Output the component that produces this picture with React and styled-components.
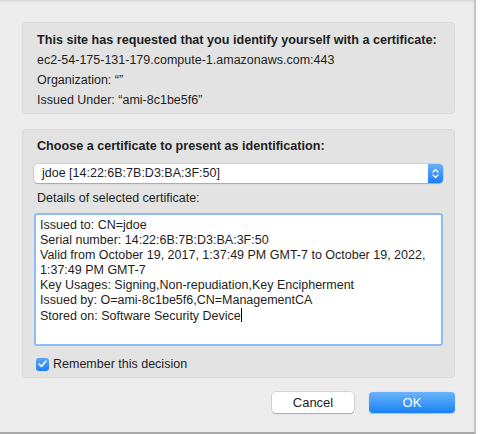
import React from "react";
import styled, { createGlobalStyle } from "styled-components";

const Global = createGlobalStyle`
  html, body { margin: 0; padding: 0; background: #ffffff; }
  body { font-family: "Liberation Sans", Arial, sans-serif; }
  * { box-sizing: border-box; }
`;

const Window = styled.div`
  width: 476px;
  height: 434px;
  background: #ececec;
  border-right: 2px solid #c4c4c4;
  border-bottom: 2px solid #a9a9a9;
  box-shadow: inset 0 3px 3px -2px rgba(0, 0, 0, 0.12);
  padding: 22px 19px 0 22px;
  display: flex;
  flex-direction: column;
  color: #1e1e1e;
  font-size: 12.5px;
`;

const Group = styled.div`
  width: 433px;
  height: ${(p) => p.$h}px;
  background: #e3e3e3;
  border: 1px solid #dadada;
  border-radius: 4px;
  padding: ${(p) => p.$pad};
  margin-bottom: ${(p) => p.$mb || 0}px;
  display: flex;
  flex-direction: column;
`;

const Title = styled.div`
  font-weight: bold;
  font-size: 12.6px;
  line-height: 20px;
  white-space: nowrap;
  padding-left: ${(p) => p.$indent || 0}px;
`;

const Line = styled.div`
  line-height: 20px;
  padding-left: ${(p) => p.$indent || 0}px;
`;

const Select = styled.div`
  margin-top: 8px;
  height: 19px;
  width: 409px;
  display: flex;
  background: #fff;
  border-radius: 4px;
  box-shadow: 0 0 0 0.5px rgba(0,0,0,0.18), 0 1px 1px rgba(0,0,0,0.18);
  overflow: hidden;
`;

const SelectText = styled.div`
  flex: 1;
  padding-left: 8px;
  line-height: 19px;
  font-size: 12.5px;
`;

const Stepper = styled.div`
  width: 15px;
  background: linear-gradient(#68b0f8, #1b80f3);
  display: flex;
  align-items: center;
  justify-content: center;
`;

const Label = styled.div`
  line-height: 20px;
  margin-top: 5px;
  padding-left: 3px;
`;

const TextArea = styled.div`
  margin-top: 5px;
  width: 409px;
  height: 133px;
  background: #fff;
  border: 2px solid #8fbdf2;
  border-radius: 3px;
  padding: 3px 4px;
  font-size: 12.5px;
  line-height: 15px;
`;

const Caret = styled.span`
  display: inline-block;
  width: 1px;
  height: 14px;
  background: #000;
  vertical-align: -2px;
`;

const CheckRow = styled.label`
  display: flex;
  align-items: center;
  gap: 4px;
  margin-top: 10px;
  padding-left: 2px;
  line-height: 16px;
  font-size: 12.5px;
`;

const Check = styled.span`
  width: 13px;
  height: 13px;
  border-radius: 3px;
  background: linear-gradient(#5aa6f7, #1c80f2);
  display: flex;
  align-items: center;
  justify-content: center;
`;

const Buttons = styled.div`
  margin-top: 14px;
  width: 433px;
  display: flex;
  justify-content: flex-end;
  gap: 15px;
`;

const Button = styled.div`
  width: ${(p) => p.$w}px;
  height: 21px;
  border-radius: 4px;
  display: flex;
  align-items: center;
  justify-content: center;
  font-size: 13px;
  ${(p) =>
    p.$primary
      ? `background: linear-gradient(#6cb4fa, #1782f4); color: #fff; box-shadow: 0 0.5px 1px rgba(0,0,0,0.2);`
      : `background: #fff; color: #1e1e1e; box-shadow: 0 0 0 0.5px rgba(0,0,0,0.2), 0 1px 1px rgba(0,0,0,0.2);`}
`;

export default function App() {
  return (
    <>
      <Global />
      <Window>
        <Group $h={92} $pad="7px 10px 3px 14px" $mb={15}>
          <Title>This site has requested that you identify yourself with a certificate:</Title>
          <Line>ec2-54-175-131-179.compute-1.amazonaws.com:443</Line>
          <Line>Organization: “”</Line>
          <Line>Issued Under: “ami-8c1be5f6”</Line>
        </Group>
        <Group $h={249} $pad="6px 10px 0 11px">
          <Title $indent={3}>Choose a certificate to present as identification:</Title>
          <Select>
            <SelectText>jdoe [14:22:6B:7B:D3:BA:3F:50]</SelectText>
            <Stepper>
              <svg width="7" height="11" viewBox="0 0 7 11">
                <path d="M1 4 L3.5 1.5 L6 4 M1 7 L3.5 9.5 L6 7" fill="none" stroke="#fff" strokeWidth="1.3" strokeLinecap="round" strokeLinejoin="round" />
              </svg>
            </Stepper>
          </Select>
          <Label>Details of selected certificate:</Label>
          <TextArea>
            Issued to: CN=jdoe<br />
            Serial number: 14:22:6B:7B:D3:BA:3F:50<br />
            Valid from October 19, 2017, 1:37:49 PM GMT-7 to October 19, 2022,<br />
            1:37:49 PM GMT-7<br />
            Key Usages: Signing,Non-repudiation,Key Encipherment<br />
            Issued by: O=ami-8c1be5f6,CN=ManagementCA<br />
            Stored on: Software Security Device<Caret />
          </TextArea>
          <CheckRow>
            <Check>
              <svg width="9" height="8" viewBox="0 0 9 8">
                <path d="M1.2 4.2 L3.5 6.4 L7.8 1.2" fill="none" stroke="#fff" strokeWidth="1.6" strokeLinecap="round" strokeLinejoin="round" />
              </svg>
            </Check>
            Remember this decision
          </CheckRow>
        </Group>
        <Buttons>
          <Button $w={82}>Cancel</Button>
          <Button $w={86} $primary>OK</Button>
        </Buttons>
      </Window>
    </>
  );
}
